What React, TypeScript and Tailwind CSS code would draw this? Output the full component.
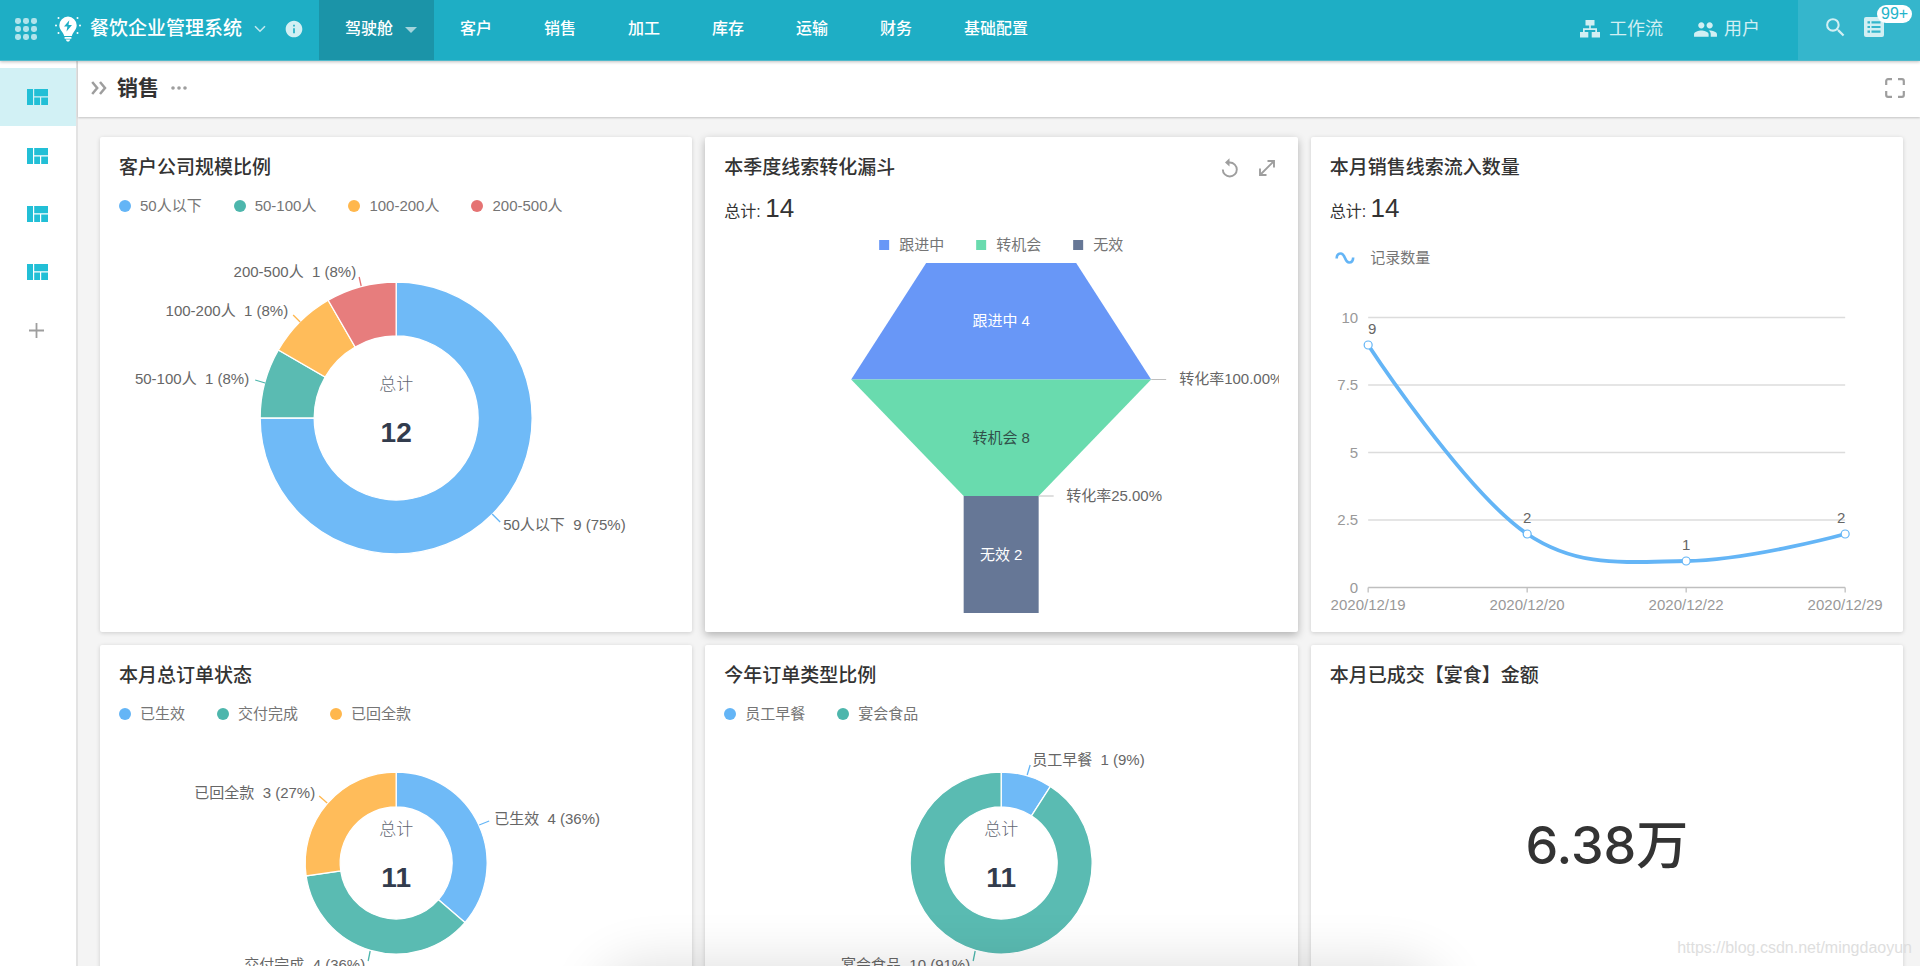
import type { ReactNode } from "react";
import { MdPeople, MdSearch, MdInfo } from "react-icons/md";

const BLUE = "#64B5F6";
const TEAL = "#4DB6AC";
const ORANGE = "#FFB74D";
const RED = "#E57373";

type Slice = {
  name: string;
  value: number;
  color: string;
  /** Leader line from the ring outwards, then the label's anchor point. */
  line: [number, number, number, number];
  label: [number, number];
  anchor: "start" | "end";
};

function AppsIcon() {
  return (
    <svg width="22" height="22" viewBox="0 0 22 22" fill="currentColor">
      {[0, 8, 16].map((y) =>
        [0, 8, 16].map((x) => <rect key={`${x}-${y}`} x={x} y={y} width="6" height="6" rx="2.4" />),
      )}
    </svg>
  );
}

function BulbIcon() {
  return (
    <svg width="26" height="26" viewBox="0 0 26 26" fill="white">
      <path
        fillRule="evenodd"
        d="M13 .6a8.7 8.7 0 0 0-8.7 8.7c0 3 1.5 4.8 2.9 6.6 1 1.3 1.7 2.6 2 4.1h7.6c.3-1.5 1-2.8 2-4.1 1.4-1.8 2.9-3.6 2.9-6.6A8.7 8.7 0 0 0 13 .6Zm1.3 3.6-5.3 6.4h3.4l-.9 5 5.5-6.7h-3.5l.8-4.7Z"
      />
      <path d="M9.600 21h6.800v1.700H9.600zM10.600 23.500h4.800L14 25.500h-2z" />
      <circle cx="1" cy="9.500" r="1" />
      <circle cx="25" cy="9.500" r="1" />
      <circle cx="3.500" cy="2" r="1" />
      <circle cx="22.500" cy="2" r="1" />
      <circle cx="3.500" cy="17" r="1" />
      <circle cx="22.500" cy="17" r="1" />
    </svg>
  );
}

function FlowIcon() {
  return (
    <svg width="20" height="18" viewBox="0 0 20 18" fill="currentColor">
      <path d="M5.500 0h9v5.500h-3.700v2.700h6.200v3.800h3V17.500h-8.300V12h3.600v-2.100H4.700V12h3.600v5.500H0V12h3V8.200h6.200V5.500H5.500z" />
    </svg>
  );
}

function ListIcon() {
  return (
    <svg width="20" height="20" viewBox="0 0 20 20">
      <rect width="20" height="20" rx="2" fill="currentColor" />
      <path
        d="M3.500 4.300h2.500v2.200H3.500zM7.500 4.300h9v2.200h-9zM3.500 8.900h2.500v2.200H3.500zM7.500 8.900h9v2.200h-9zM3.500 13.500h2.500v2.200H3.500zM7.500 13.500h9v2.200h-9z"
        fill="#35b6cc"
      />
    </svg>
  );
}

function DashboardIcon() {
  return (
    <svg width="21" height="16" viewBox="0 0 21 16" fill="#22bfd6">
      <path d="M0 0h6v16H0zM7.200 0H21v7.300H7.200zM7.200 8.500H13V16H7.200zM14.200 8.500H21V16h-6.800z" />
    </svg>
  );
}

function FullscreenIcon() {
  return (
    <svg width="20" height="20" viewBox="0 0 20 20" fill="none" stroke="#9e9e9e" strokeWidth="2.200">
      <path d="M1.200 7V3a1.800 1.800 0 0 1 1.800-1.800h4M13 1.200h4A1.800 1.800 0 0 1 18.800 3v4M18.800 13v4a1.800 1.800 0 0 1-1.800 1.800h-4M7 18.800H3A1.800 1.800 0 0 1 1.200 17v-4" />
    </svg>
  );
}

function RefreshIcon() {
  return (
    <svg width="18" height="20" viewBox="0 0 18 20">
      <path d="M1.800 11.500a7 7 0 1 0 7-7H7.500" fill="none" stroke="#9e9e9e" strokeWidth="1.900" />
      <path d="M8.500.2v8.400L4 4.400z" fill="#9e9e9e" />
    </svg>
  );
}

function ExpandIcon() {
  return (
    <svg width="16" height="16" viewBox="0 0 16 16" fill="none" stroke="#9e9e9e" strokeWidth="1.900">
      <path d="M8.500 1H15v6.500M15 1 1 15M1 8.500V15h6.500" />
    </svg>
  );
}

const NAV = ["客户", "销售", "加工", "库存", "运输", "财务", "基础配置"];

function Header() {
  return (
    <header className="relative z-20 flex h-[61px] shrink-0 items-stretch border-b border-[#4fb9cb] bg-[#1eaec5] text-white shadow-[0_1px_3px_rgba(0,0,0,0.25)]">
      <div className="flex w-[319px] items-center pb-[2px] pl-[15px]">
        <button aria-label="应用" className="text-white/65">
          <AppsIcon />
        </button>
        <div className="ml-[18px]">
          <BulbIcon />
        </div>
        <h1 className="ml-[9px] text-[19px] font-medium">餐饮企业管理系统</h1>
        <button aria-label="展开" className="ml-3">
          <svg width="12" height="8" viewBox="0 0 12 8" fill="none" stroke="#c0e8ef" strokeWidth="1.600">
            <path d="m1 1.200 5 5 5-5" />
          </svg>
        </button>
        <button aria-label="说明" className="ml-[18px] text-[#d2eff3]">
          <MdInfo size={20} />
        </button>
      </div>
      <nav className="flex text-base font-medium">
        <a href="#cockpit" className="flex items-center gap-3 bg-[#1b94a8] pr-[17px] pb-[2px] pl-[26px]">
          驾驶舱
          <svg width="12" height="6" viewBox="0 0 12 6" className="mt-[2px]">
            <path d="M0 0h12L6 6z" fill="#a3d4dc" />
          </svg>
        </a>
        {NAV.map((name) => (
          <a key={name} href={`#${name}`} className="flex items-center px-[26px] pb-[2px]">
            {name}
          </a>
        ))}
      </nav>
      <div className="ml-auto flex items-center gap-[30px] pr-[38px] pb-[2px] text-lg text-[#d2eff3]">
        <a href="#workflow" className="flex items-center gap-[9px]">
          <FlowIcon />
          工作流
        </a>
        <a href="#users" className="flex items-center gap-[6px]">
          <MdPeople size={25} />
          用户
        </a>
      </div>
      <div className="flex w-[122px] items-center bg-[#35b6cc] pb-[6px] pl-[25px] text-[#d2eff3]">
        <button aria-label="搜索">
          <MdSearch size={25} />
        </button>
        <button aria-label="通知" className="relative ml-4">
          <ListIcon />
          <span className="absolute -top-3 left-[13px] rounded-full bg-white px-1 text-base leading-[18px] text-[#22b4ca]">
            99+
          </span>
        </button>
      </div>
    </header>
  );
}

function Sidebar() {
  return (
    <aside className="w-[78px] shrink-0 border-r-2 border-[#e3e3e3] bg-white pt-[7px]">
      <div className="flex h-[292px] flex-col">
        {["一", "二", "三", "四"].map((n, i) => (
          <button
            key={n}
            aria-label={`页面${n}`}
            className={`flex flex-1 items-center justify-center pr-[1px] ${i === 0 ? "bg-[#d2f1f5]" : ""}`}
          >
            <DashboardIcon />
          </button>
        ))}
        <button aria-label="新增" className="flex flex-1 items-center justify-center pr-1">
          <svg width="15" height="15" viewBox="0 0 15 15" stroke="#9e9e9e" strokeWidth="1.800">
            <path d="M7.500 0v15M0 7.500h15" />
          </svg>
        </button>
      </div>
    </aside>
  );
}

function Card({ title, tall, raised, actions, children }: {
  title: string;
  tall?: boolean;
  raised?: boolean;
  actions?: ReactNode;
  children: ReactNode;
}) {
  return (
    <section
      className={`flex min-w-0 flex-col rounded-[2px] bg-white px-[19px] pt-[17px] ${tall ? "min-h-[495px]" : "min-h-[369px]"} ${
        raised ? "shadow-[0_3px_9px_rgba(0,0,0,0.28)]" : "shadow-[0_1px_4px_rgba(0,0,0,0.16)]"
      }`}
    >
      <div className="flex h-7 items-center justify-between">
        <h2 className="text-[19px] leading-7 font-medium text-[#333]">{title}</h2>
        {actions}
      </div>
      {children}
    </section>
  );
}

function Legend({ items }: { items: { name: string; color: string }[] }) {
  return (
    <ul className="mt-3 flex h-[23px] gap-8 text-[15px] leading-6 text-[#757575]">
      {items.map((item) => (
        <li key={item.name} className="flex items-center gap-[9px]">
          <svg width="12" height="12" viewBox="0 0 12 12">
            <circle cx="6" cy="6" r="6" fill={item.color} />
          </svg>
          {item.name}
        </li>
      ))}
    </ul>
  );
}

function Total({ value }: { value: number }) {
  return (
    <p className="mt-[10px] h-[33px] text-base leading-8 text-[#333]">
      总计: <span className="text-[26px]">{value}</span>
    </p>
  );
}

function sector(cx: number, cy: number, r: number, inner: number, from: number, to: number) {
  const point = (radius: number, t: number) => {
    const a = t * 2 * Math.PI - Math.PI / 2;
    return `${(cx + radius * Math.cos(a)).toFixed(2)} ${(cy + radius * Math.sin(a)).toFixed(2)}`;
  };
  const large = to - from > 0.5 ? 1 : 0;
  return `M${point(r, from)}A${r} ${r} 0 ${large} 1 ${point(r, to)}L${point(inner, to)}A${inner} ${inner} 0 ${large} 0 ${point(inner, from)}Z`;
}

function Donut({ slices, height, r, inner, cy, titleY, valueY }: {
  slices: Slice[];
  height: number;
  r: number;
  inner: number;
  cy: number;
  titleY: number;
  valueY: number;
}) {
  const total = slices.reduce((sum, s) => sum + s.value, 0);
  const cx = 277;
  let start = 0;
  return (
    <svg width="100%" height={height} viewBox={`0 0 554 ${height}`} role="img">
      {slices.map((s) => {
        const from = start;
        start += s.value / total;
        return (
          <g key={s.name}>
            <path
              d={sector(cx, cy, r, inner, from, start)}
              fill={s.color}
              fillOpacity="0.93"
              stroke="white"
              strokeWidth="1.300"
            />
            <path d={`M${s.line[0]} ${s.line[1]}L${s.line[2]} ${s.line[3]}`} stroke={s.color} strokeWidth="1.300" />
            <text
              x={s.label[0]}
              y={s.label[1]}
              textAnchor={s.anchor}
              className="fill-[#666] text-[15px] whitespace-pre"
            >
              {`${s.name}  ${s.value} (${Math.round((s.value / total) * 100)}%)`}
            </text>
          </g>
        );
      })}
      <text x={cx} y={titleY} textAnchor="middle" className="fill-[#5f6672] text-[17px] font-light">
        总计
      </text>
      <text x={cx} y={valueY} textAnchor="middle" className="fill-[#323c4d] text-[28px] font-bold">
        {total}
      </text>
    </svg>
  );
}

const SIZE_SLICES: Slice[] = [
  { name: "50人以下", value: 9, color: BLUE, line: [373, 297, 381, 305], label: [384, 313], anchor: "start" },
  { name: "50-100人", value: 1, color: TEAL, line: [146, 166, 136, 163], label: [130, 167], anchor: "end" },
  { name: "100-200人", value: 1, color: ORANGE, line: [181, 105, 174, 98], label: [169, 99], anchor: "end" },
  { name: "200-500人", value: 1, color: RED, line: [242, 69, 240, 60], label: [237, 60], anchor: "end" },
];

const STATUS_SLICES: Slice[] = [
  { name: "已生效", value: 4, color: BLUE, line: [360, 100, 370, 96], label: [375, 99], anchor: "start" },
  { name: "交付完成", value: 4, color: TEAL, line: [251, 226, 249, 236], label: [246, 245], anchor: "end" },
  { name: "已回全款", value: 3, color: ORANGE, line: [208, 78, 200, 71], label: [196, 73], anchor: "end" },
];

const TYPE_SLICES: Slice[] = [
  { name: "员工早餐", value: 1, color: BLUE, line: [303, 50, 306, 40], label: [308, 40], anchor: "start" },
  { name: "宴会食品", value: 10, color: TEAL, line: [251, 226, 249, 236], label: [246, 245], anchor: "end" },
];

function Funnel() {
  return (
    <svg width="100%" height="394" viewBox="0 0 554 394" role="img" className="text-[15px]">
      <g className="fill-[#757575]">
        <rect x="155" y="15" width="10" height="10" fill="#6897f7" />
        <text x="175" y="25">跟进中</text>
        <rect x="252" y="15" width="10" height="10" fill="#69dbae" />
        <text x="272" y="25">转机会</text>
        <rect x="349" y="15" width="10" height="10" fill="#667796" />
        <text x="369" y="25">无效</text>
      </g>
      <path d="M202 38h150l75 116.500H127z" fill="#6897f7" />
      <path d="M127 154.500h300L314.500 271h-75z" fill="#69dbae" />
      <path d="M239.500 271h75v117h-75z" fill="#667796" />
      <path d="M427 154.500h15M314.500 271h15" stroke="#bfbfbf" />
      <g textAnchor="middle">
        <text x="277" y="101" fill="white">跟进中 4</text>
        <text x="277" y="218" fill="#31514a">转机会 8</text>
        <text x="277" y="335" fill="white">无效 2</text>
      </g>
      <g className="fill-[#666]">
        <text x="455" y="159">转化率100.00%</text>
        <text x="342" y="276">转化率25.00%</text>
      </g>
    </svg>
  );
}

const TICKS = [
  { label: "10", y: 92.5 },
  { label: "7.5", y: 160 },
  { label: "5", y: 227.5 },
  { label: "2.5", y: 295 },
];

const POINTS = [
  { date: "2020/12/19", value: 9, x: 38, y: 120, tx: 42, ty: 109 },
  { date: "2020/12/20", value: 2, x: 197, y: 309, tx: 197, ty: 298 },
  { date: "2020/12/22", value: 1, x: 356, y: 336, tx: 356, ty: 325 },
  { date: "2020/12/29", value: 2, x: 515, y: 309, tx: 511, ty: 298 },
];

function LineChart() {
  return (
    <svg width="100%" height="394" viewBox="0 0 554 394" role="img" overflow="visible" className="text-[15px]">
      <path
        d="M6.500 33.500c0-3.500 2-5 4.200-5 4.600 0 3.600 9 8.200 9 2.200 0 4.100-1.500 4.100-5"
        fill="none"
        stroke={BLUE}
        strokeWidth="2.600"
      />
      <text x="40" y="38" className="fill-[#757575]">记录数量</text>
      {TICKS.map((t) => (
        <g key={t.label}>
          <path d={`M38 ${t.y}H515`} stroke="#dcdcdc" strokeWidth="1.300" />
          <text x="28" y={t.y + 5} textAnchor="end" className="fill-[#999]">{t.label}</text>
        </g>
      ))}
      <path d="M38 362.500H515" stroke="#bfbfbf" strokeWidth="1.300" />
      <text x="28" y="368" textAnchor="end" className="fill-[#999]">0</text>
      <path
        d="M38 120C38 120 134 266 197 309C248 343 293 337 356 336C420 335 515 309 515 309"
        fill="none"
        stroke={BLUE}
        strokeWidth="3.800"
      />
      {POINTS.map((p) => (
        <g key={p.date}>
          <path d={`M${p.x} 362.500v5`} stroke="#bfbfbf" strokeWidth="1.300" />
          <circle cx={p.x} cy={p.y} r="4" fill="white" stroke={BLUE} strokeWidth="1.200" />
          <text x={p.tx} y={p.ty} textAnchor="middle" className="fill-[#666]">{p.value}</text>
          <text x={p.x} y="385" textAnchor="middle" className="fill-[#999]">{p.date}</text>
        </g>
      ))}
    </svg>
  );
}

export default function App() {
  return (
    <div className="relative flex h-screen flex-col overflow-hidden bg-[#f4f4f4] font-['Liberation_Sans','Noto_Sans_CJK_SC',sans-serif]">
      <Header />
      <div className="flex min-h-0 flex-1">
        <Sidebar />
        <div className="flex min-w-0 flex-1 flex-col">
          <div className="z-10 flex h-14 shrink-0 items-center bg-white pr-[15px] pb-[2px] pl-[13px] shadow-[0_1px_2px_rgba(0,0,0,0.2)]">
            <button aria-label="展开侧栏">
              <svg width="16" height="14" viewBox="0 0 16 14" fill="none" stroke="#9e9e9e" strokeWidth="2.500">
                <path d="m1.200 1 5 6-5 6M9 1l5 6-5 6" />
              </svg>
            </button>
            <h2 className="ml-[10px] text-[21px] font-bold text-[#333]">销售</h2>
            <button aria-label="更多" className="ml-3">
              <svg width="16" height="4" viewBox="0 0 16 4" fill="#9e9e9e">
                <circle cx="2" cy="2" r="1.800" />
                <circle cx="8" cy="2" r="1.800" />
                <circle cx="14" cy="2" r="1.800" />
              </svg>
            </button>
            <button aria-label="全屏" className="ml-auto">
              <FullscreenIcon />
            </button>
          </div>
          <main className="grid min-h-0 flex-1 auto-rows-max grid-cols-3 gap-[13px] overflow-hidden pt-5 pr-[17px] pl-[22px]">
            <Card title="客户公司规模比例" tall>
              <Legend items={SIZE_SLICES} />
              <Donut slices={SIZE_SLICES} height={402} r={136} inner={82} cy={201} titleY={173} valueY={225} />
            </Card>
            <Card
              title="本季度线索转化漏斗"
              tall
              raised
              actions={
                <div className="flex items-center gap-5 pr-1">
                  <button aria-label="刷新">
                    <RefreshIcon />
                  </button>
                  <button aria-label="放大">
                    <ExpandIcon />
                  </button>
                </div>
              }
            >
              <Total value={14} />
              <Funnel />
            </Card>
            <Card title="本月销售线索流入数量" tall>
              <Total value={14} />
              <LineChart />
            </Card>
            <Card title="本月总订单状态">
              <Legend items={STATUS_SLICES} />
              <Donut slices={STATUS_SLICES} height={276} r={91} inner={56} cy={138} titleY={110} valueY={162} />
            </Card>
            <Card title="今年订单类型比例">
              <Legend items={TYPE_SLICES} />
              <Donut slices={TYPE_SLICES} height={276} r={91} inner={56} cy={138} titleY={110} valueY={162} />
            </Card>
            <Card title="本月已成交【宴食】金额">
              <div className="flex flex-1 items-center justify-center pb-3 font-[Inter,'Noto_Sans_CJK_SC'] text-[52px] font-medium text-[#333]">
                6.38万
              </div>
            </Card>
          </main>
        </div>
      </div>
      <div className="pointer-events-none absolute right-[480px] -bottom-[100px] left-[600px] z-20 h-[100px] rounded-[40px] shadow-[0_0_56px_rgba(0,0,0,0.14)]" />
      <p className="pointer-events-none absolute right-2 bottom-2 z-30 text-base leading-5 text-[#dedede]">
        https://blog.csdn.net/mingdaoyun
      </p>
    </div>
  );
}
